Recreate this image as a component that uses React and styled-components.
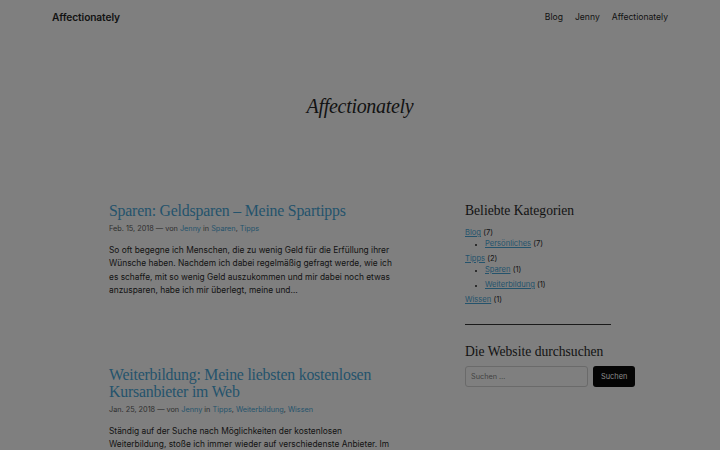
import React from 'react';
import styled, { createGlobalStyle } from 'styled-components';

const GlobalStyle = createGlobalStyle`
  html, body {
    margin: 0;
    padding: 0;
    background: #7f7f7f;
  }
  body {
    font-family: Inter, "Liberation Sans", sans-serif;
    color: #121212;
  }
  a {
    color: #24536c;
  }
`;

const Page = styled.div`
  min-height: 450px;
  background: #7f7f7f;
`;

const Header = styled.header`
  display: flex;
  align-items: center;
  justify-content: space-between;
  height: 34px;
  padding: 0 52px;
`;

const Brand = styled.div`
  font-size: 10.2px;
  font-weight: 600;
  letter-spacing: -0.1px;
`;

const Nav = styled.nav`
  display: flex;
  gap: 12px;
  font-size: 8.6px;
`;

const NavLink = styled.span`
  color: #121212;
`;

const Hero = styled.h1`
  margin: 61px 0 0;
  text-align: center;
  font-family: "Liberation Serif", serif;
  font-style: italic;
  font-weight: 400;
  font-size: 20px;
  letter-spacing: -0.3px;
  color: #121212;
`;

const Body = styled.div`
  display: grid;
  grid-template-columns: 290px 170px;
  column-gap: 66px;
  padding: 84px 0 0 109px;
`;

const Posts = styled.main`
  display: flex;
  flex-direction: column;
  gap: 68px;
`;

const Post = styled.article``;

const PostTitle = styled.h2`
  margin: 0;
  font-family: "Liberation Serif", serif;
  font-weight: 400;
  font-size: 15.8px;
  line-height: 17.5px;
  letter-spacing: -0.2px;
  color: #24536c;
`;

const Meta = styled.div`
  margin-top: 4px;
  font-size: 7.3px;
  color: #2e2e2e;

  a {
    text-decoration: none;
  }
`;

const Excerpt = styled.p`
  margin: 11px 0 0;
  font-size: 8.4px;
  line-height: 13.6px;
  color: #121212;
`;

const Sidebar = styled.aside`
  display: flex;
  flex-direction: column;
  padding-top: 1px;
`;

const WidgetTitle = styled.h3`
  margin: 0;
  font-family: "Liberation Serif", serif;
  font-weight: 400;
  font-size: 13.6px;
  color: #121212;
`;

const CatList = styled.ul`
  list-style: none;
  margin: 9px 0 0;
  padding: 0;
  font-size: 7.6px;
`;

const CatItem = styled.li`
  margin-bottom: 6px;
`;

const SubList = styled.ul`
  margin: 2px 0 0;
  padding-left: 20px;
  list-style: square;

  li {
    margin-bottom: 6px;
    font-size: 7.6px;
  }
  li::marker {
    color: #2e2e2e;
    font-size: 5px;
  }
`;

const Divider = styled.hr`
  width: 146px;
  margin: 14px 0 19px;
  border: none;
  border-top: 1px solid #1a1a1a;
`;

const SearchRow = styled.form`
  display: flex;
  gap: 5px;
  margin-top: 6px;
`;

const SearchInput = styled.input`
  box-sizing: border-box;
  width: 123px;
  height: 21px;
  padding: 0 5px;
  background: transparent;
  border: 1px solid #6a6a6a;
  border-radius: 3px;
  font-family: Inter, "Liberation Sans", sans-serif;
  font-size: 7.3px;
  color: #121212;

  &::placeholder {
    color: #3f3f3f;
  }
`;

const SearchButton = styled.button`
  height: 21px;
  padding: 0 8px;
  background: #050505;
  border: none;
  border-radius: 3px;
  font-family: Inter, "Liberation Sans", sans-serif;
  font-size: 7.4px;
  color: #8c8c8c;
`;

const posts = [
  {
    title: 'Sparen: Geldsparen – Meine Spartipps',
    date: 'Feb. 15, 2018',
    cats: ['Sparen', 'Tipps'],
    text: 'So oft begegne ich Menschen, die zu wenig Geld für die Erfüllung ihrer Wünsche haben. Nachdem ich dabei regelmäßig gefragt werde, wie ich es schaffe, mit so wenig Geld auszukommen und mir dabei noch etwas anzusparen, habe ich mir überlegt, meine und…',
  },
  {
    title: 'Weiterbildung: Meine liebsten kostenlosen Kursanbieter im Web',
    date: 'Jan. 25, 2018',
    cats: ['Tipps', 'Weiterbildung', 'Wissen'],
    text: 'Ständig auf der Suche nach Möglichkeiten der kostenlosen Weiterbildung, stoße ich immer wieder auf verschiedenste Anbieter. Im Laufe der Zeit habe ich so einige Plattformen kennengelernt.',
  },
];

export default function App() {
  return (
    <Page>
      <GlobalStyle />
      <Header>
        <Brand>Affectionately</Brand>
        <Nav>
          <NavLink>Blog</NavLink>
          <NavLink>Jenny</NavLink>
          <NavLink>Affectionately</NavLink>
        </Nav>
      </Header>

      <Hero>Affectionately</Hero>

      <Body>
        <Posts>
          {posts.map(post => (
            <Post key={post.title}>
              <PostTitle>{post.title}</PostTitle>
              <Meta>
                {post.date} — von <a href="#">Jenny</a> in{' '}
                {post.cats.map((c, i) => (
                  <React.Fragment key={c}>
                    {i > 0 && ', '}
                    <a href="#">{c}</a>
                  </React.Fragment>
                ))}
              </Meta>
              <Excerpt>{post.text}</Excerpt>
            </Post>
          ))}
        </Posts>

        <Sidebar>
          <WidgetTitle>Beliebte Kategorien</WidgetTitle>
          <CatList>
            <CatItem>
              <a href="#">Blog</a> (7)
              <SubList>
                <li><a href="#">Persönliches</a> (7)</li>
              </SubList>
            </CatItem>
            <CatItem>
              <a href="#">Tipps</a> (2)
              <SubList>
                <li><a href="#">Sparen</a> (1)</li>
                <li><a href="#">Weiterbildung</a> (1)</li>
              </SubList>
            </CatItem>
            <CatItem>
              <a href="#">Wissen</a> (1)
            </CatItem>
          </CatList>

          <Divider />

          <WidgetTitle>Die Website durchsuchen</WidgetTitle>
          <SearchRow onSubmit={e => e.preventDefault()}>
            <SearchInput placeholder="Suchen …" />
            <SearchButton type="submit">Suchen</SearchButton>
          </SearchRow>
        </Sidebar>
      </Body>
    </Page>
  );
}
